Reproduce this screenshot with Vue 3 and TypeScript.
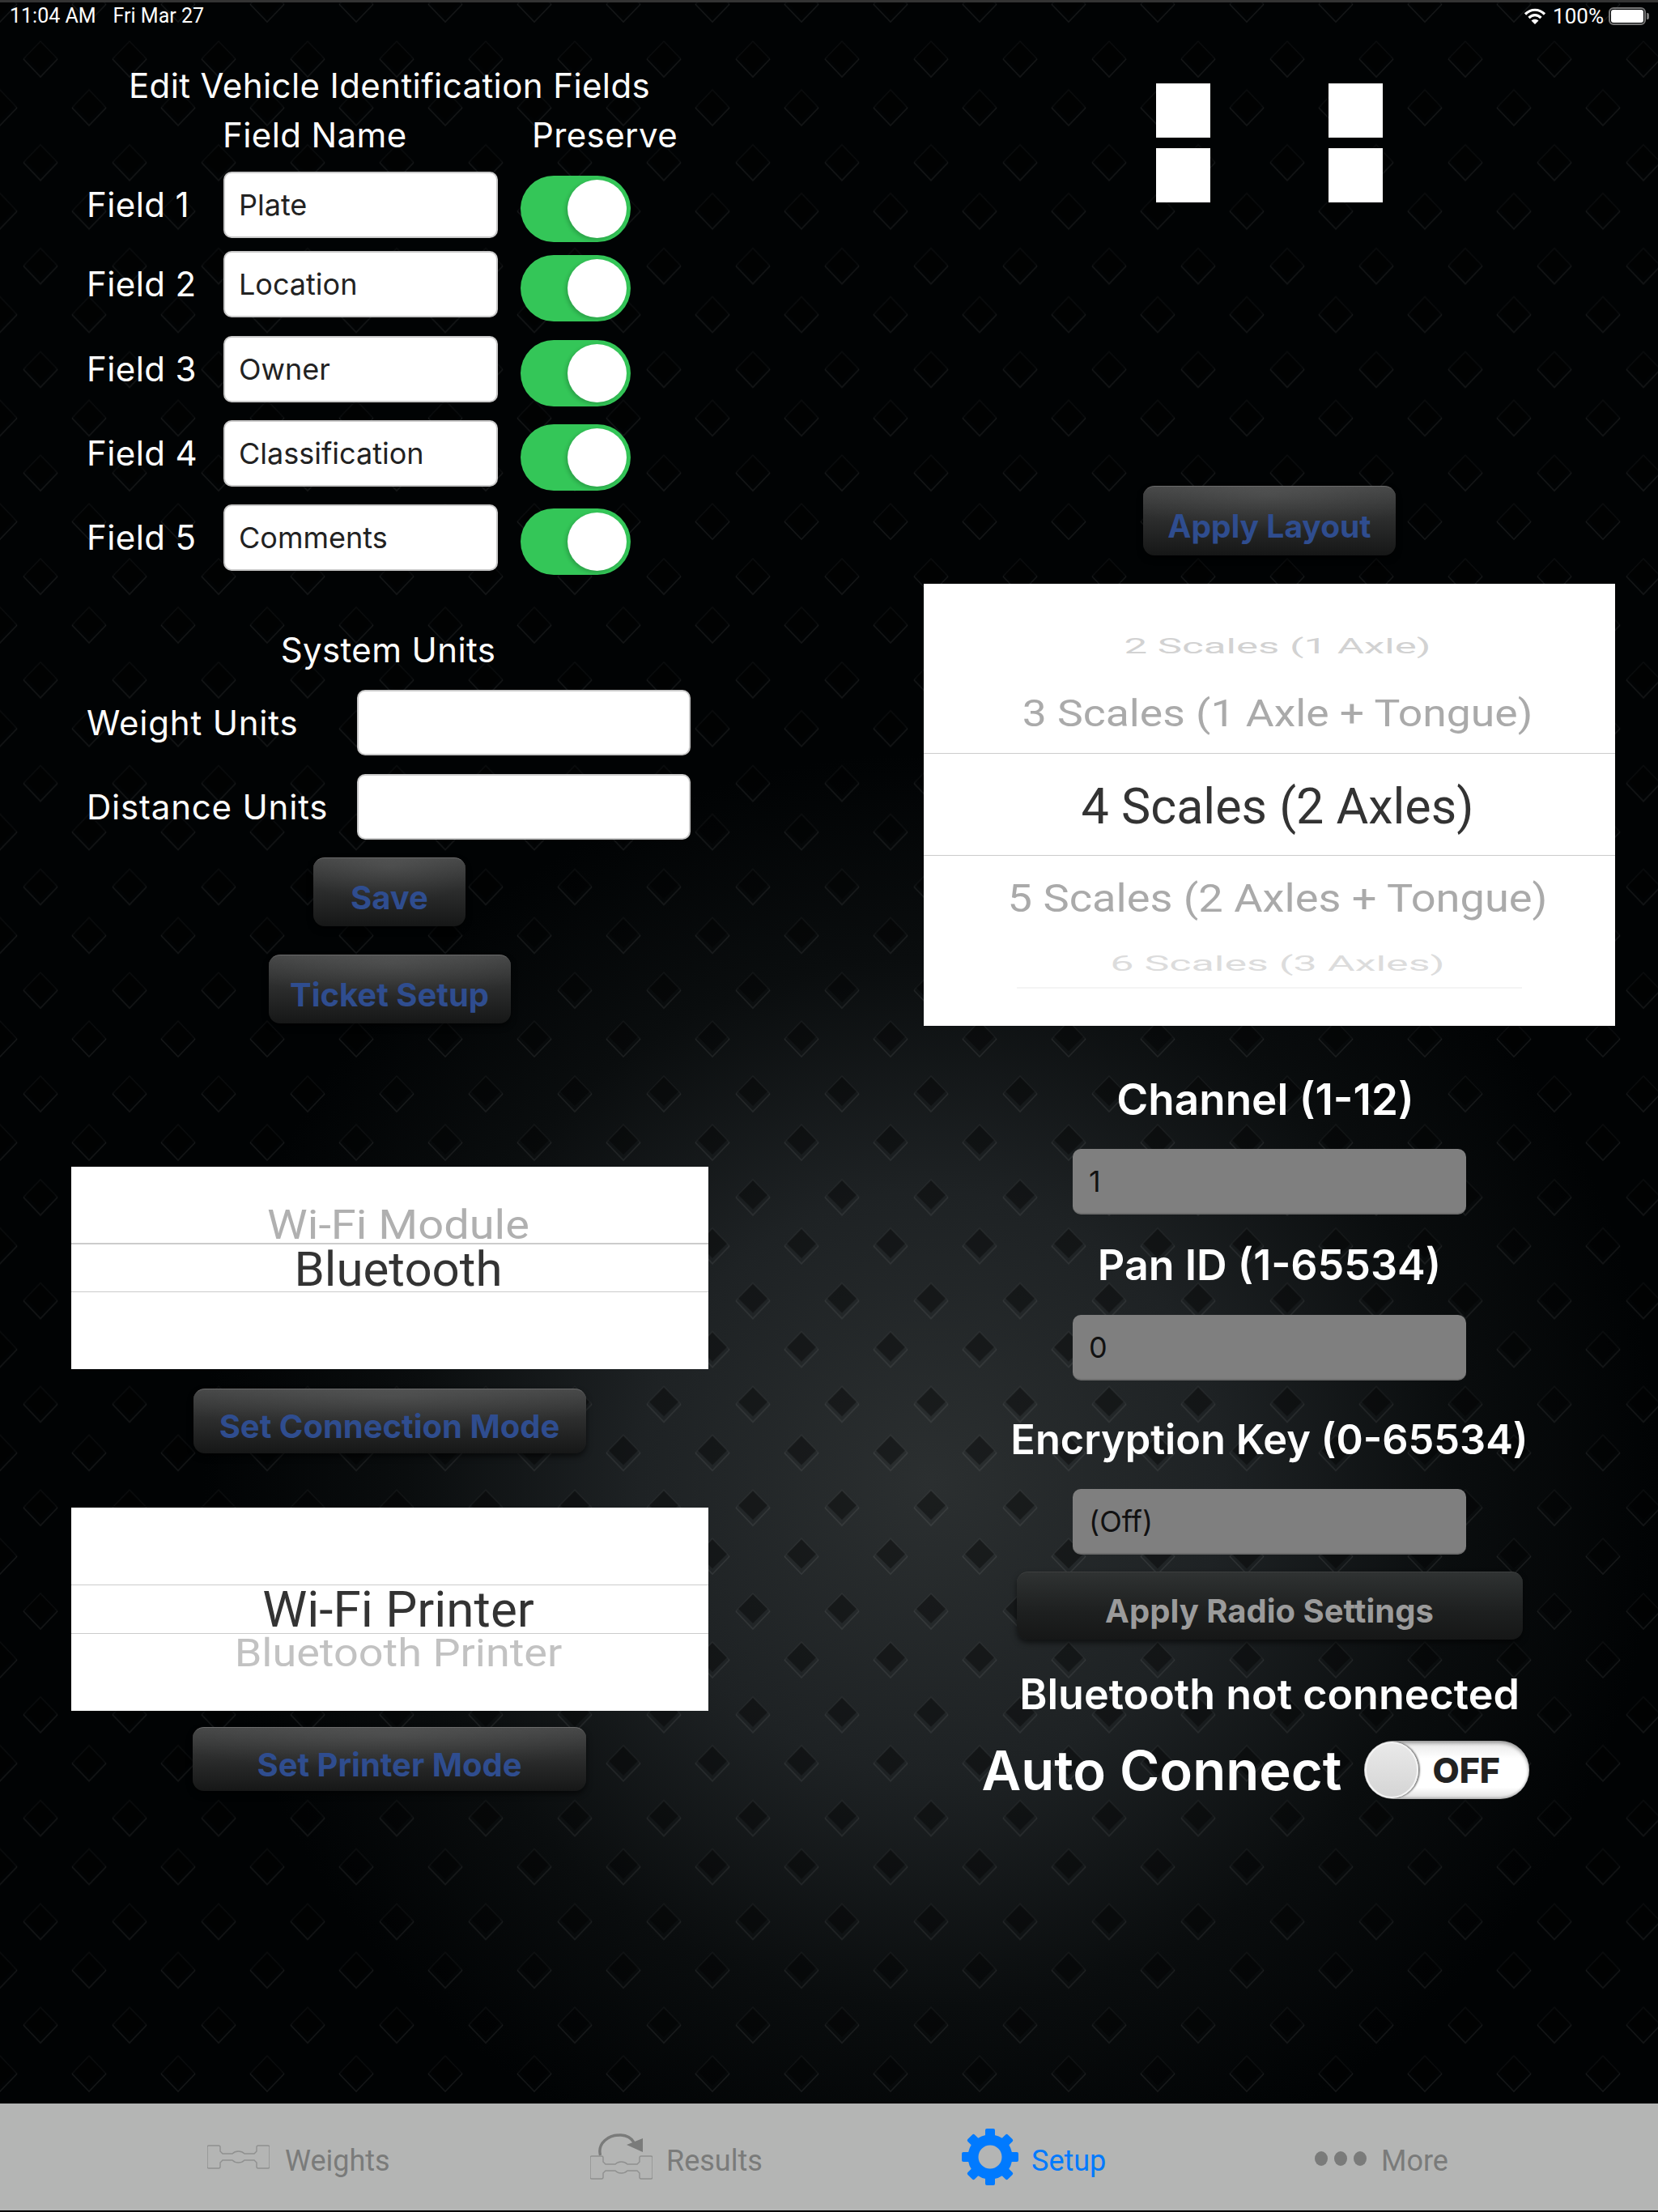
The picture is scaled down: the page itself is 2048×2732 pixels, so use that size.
<script setup lang="ts">
const fields: string[][] = [
  ['Field 1', 'Plate'],
  ['Field 2', 'Location'],
  ['Field 3', 'Owner'],
  ['Field 4', 'Classification'],
  ['Field 5', 'Comments'],
]
const teeth: number[] = [0, 45, 90, 135, 180, 225, 270, 315]
const axle =
  'M2 1H14Q16 1 16 3V8L19 11H31Q34 8 38.5 8Q43 8 46 11H58L61 8V3Q61 1 63 1H75Q77 1 77 3V27Q77 29 75 29H63Q61 29 61 27V22L58 19H46Q43 22 38.5 22Q34 22 31 19H19L16 22V27Q16 29 14 29H2Q0 29 0 27V3Q0 1 2 1Z'
</script>

<template>
  <div class="root">
    <svg class="bg" width="2048" height="2732" xmlns="http://www.w3.org/2000/svg">
      <defs>
        <radialGradient id="glow" gradientUnits="userSpaceOnUse" cx="1150" cy="1830" r="900">
          <stop offset="0" stop-color="#2b2f30" />
          <stop offset="0.4" stop-color="#1e2224" />
          <stop offset="0.72" stop-color="#0a0d0e" />
          <stop offset="1" stop-color="#010304" />
        </radialGradient>
        <g id="dia">
          <path d="M-21 0L0 -22L21 0" fill="none" stroke="#fff" stroke-opacity="0.04" stroke-width="1.5" />
          <path d="M-21 0L0 22L21 0" fill="none" stroke="#fff" stroke-opacity="0.075" stroke-width="1.5" />
          <path d="M-18 -3L0 -21L18 -3L0 15Z" fill="#000" fill-opacity="0.38" />
        </g>
        <pattern id="diamonds" patternUnits="userSpaceOnUse" width="110" height="127.8" patternTransform="translate(0 40)">
          <use href="#dia" x="50" y="33" />
          <use href="#dia" x="0" y="93" />
          <use href="#dia" x="110" y="93" />
        </pattern>
      </defs>
      <rect width="2048" height="2732" fill="url(#glow)" />
      <rect width="2048" height="2732" fill="url(#diamonds)" />
    </svg>

    <header class="status">
      <div class="status-left"><span>11:04 AM</span><span>Fri Mar 27</span></div>
      <div class="status-right">
        <svg width="28" height="20" viewBox="0 0 28 20">
          <path d="M2 7.5C9 .5 19 .5 26 7.5" fill="none" stroke="#fff" stroke-width="3.2" />
          <path d="M6.500 12C11 7.500 17 7.500 21.500 12" fill="none" stroke="#fff" stroke-width="3.2" />
          <path d="M14 20L9.500 15.500C12 13 16 13 18.500 15.500Z" fill="#fff" />
        </svg>
        <span>100%</span>
        <div class="battery"><div class="battery-fill"></div></div>
        <div class="battery-nub"></div>
      </div>
    </header>

    <main class="main">
      <section class="left">
        <div class="label title">Edit Vehicle Identification Fields</div>
        <div class="heads">
          <span class="label head-name">Field Name</span>
          <span class="label head-preserve">Preserve</span>
        </div>
        <div v-for="f in fields" :key="f[0]" class="row">
          <span class="label row-label">{{ f[0] }}</span>
          <div class="input name-input">{{ f[1] }}</div>
          <div class="toggle"><div class="knob"></div></div>
        </div>

        <div class="label units-title">System Units</div>
        <div class="unit-row first-unit">
          <span class="label unit-label">Weight Units</span>
          <div class="input unit-input"></div>
        </div>
        <div class="unit-row second-unit">
          <span class="label unit-label">Distance Units</span>
          <div class="input unit-input"></div>
        </div>

        <button class="btn save">Save</button>
        <button class="btn ticket">Ticket Setup</button>

        <div class="picker small conn">
          <div class="p-top"><span class="wm">Wi-Fi Module</span></div>
          <div class="p-band thick"><span class="sel-b">Bluetooth</span></div>
        </div>
        <button class="btn conn-btn">Set Connection Mode</button>

        <div class="picker small print">
          <div class="p-blank"></div>
          <div class="p-band"><span class="sel-w">Wi-Fi Printer</span></div>
          <div class="p-bottom"><span class="bp">Bluetooth Printer</span></div>
        </div>
        <button class="btn print-btn">Set Printer Mode</button>
      </section>

      <section class="right">
        <div class="squares">
          <div class="sq"></div><div class="sq"></div><div class="sq"></div><div class="sq"></div>
        </div>
        <button class="btn layout-btn">Apply Layout</button>

        <div class="picker big">
          <div class="b-row r-a"><span class="t-a">2 Scales (1 Axle)</span></div>
          <div class="b-row r-b"><span class="t-b">3 Scales (1 Axle + Tongue)</span></div>
          <div class="b-row r-c"><span class="t-c">4 Scales (2 Axles)</span></div>
          <div class="b-row r-d"><span class="t-b t-d">5 Scales (2 Axles + Tongue)</span></div>
          <div class="b-row r-e"><span class="t-e">6 Scales (3 Axles)</span></div>
          <div class="b-row r-f"></div>
        </div>

        <div class="bold h-channel">Channel (1-12)</div>
        <div class="input grey">1</div>
        <div class="bold h-pan">Pan ID (1-65534)</div>
        <div class="input grey">0</div>
        <div class="bold h-enc">Encryption Key (0-65534)</div>
        <div class="input grey">(Off)</div>
        <button class="btn radio-btn">Apply Radio Settings</button>
        <div class="bold h-bt">Bluetooth not connected</div>
        <div class="auto">
          <span class="auto-label">Auto Connect</span>
          <div class="off-toggle"><div class="off-knob"></div><span class="off-text">OFF</span></div>
        </div>
      </section>
    </main>

    <nav class="tabbar">
      <div class="tab tab-weights">
        <svg width="77" height="30" viewBox="0 0 77 30"><path :d="axle" fill="none" stroke="#8f908f" stroke-width="1.4" /></svg>
        <span>Weights</span>
      </div>
      <div class="tab tab-results">
        <svg width="77" height="58" viewBox="0 0 77 58">
          <path d="M12.500 27C9 12 22 1.500 38 2C46 2.300 51 6 54 11" fill="none" stroke="#7a7b7a" stroke-width="3.4" />
          <path d="M65 6V23L45 14Z" fill="#7a7b7a" />
          <g transform="translate(0 27)"><path :d="axle" fill="none" stroke="#8f908f" stroke-width="1.4" /></g>
        </svg>
        <span>Results</span>
      </div>
      <div class="tab tab-setup">
        <svg width="70" height="70" viewBox="-35 -35 70 70">
          <circle r="21" fill="none" stroke="#007aff" stroke-width="13" />
          <rect v-for="a in teeth" :key="a" x="-6" y="-35" width="12" height="12" rx="2" fill="#007aff" :transform="`rotate(${a})`" />
        </svg>
        <span>Setup</span>
      </div>
      <div class="tab tab-more">
        <svg class="dots" width="64" height="20" viewBox="0 0 64 20">
          <ellipse cx="8" cy="10" rx="8" ry="9" fill="#7a7b7a" />
          <ellipse cx="32" cy="10" rx="8" ry="9" fill="#7a7b7a" />
          <ellipse cx="56" cy="10" rx="8" ry="9" fill="#7a7b7a" />
        </svg>
        <span>More</span>
      </div>
    </nav>
  </div>
</template>

<style scoped>
.root {
  position: relative;
  width: 2048px;
  height: 2732px;
  overflow: hidden;
  background: #010304;
  display: flex;
  flex-direction: column;
  font-family: Inter, "Liberation Sans", sans-serif;
  color: #fff;
}
.bg { position: absolute; left: 0; top: 0; }

.status {
  position: relative;
  height: 40px;
  box-sizing: border-box;
  border-top: 3px solid #333;
  display: flex;
  justify-content: space-between;
  align-items: center;
  padding: 0 12px 4px;
}
.status-left { display: flex; gap: 21px; font-family: Roboto, sans-serif; font-size: 25px; }
.status-right { display: flex; align-items: center; font-family: Roboto, sans-serif; font-size: 26px; }
.status-right svg { margin-right: 2px; }
.status-right span { margin-left: 6px; margin-right: 6px; }
.battery {
  width: 46px; height: 22px; box-sizing: border-box; border: 2px solid #777; border-radius: 6px; padding: 1px;
}
.battery-fill { width: 100%; height: 100%; background: #fff; border-radius: 3px; }
.battery-nub { width: 3px; height: 8px; background: #777; margin-left: 1px; margin-right: -1px; border-radius: 0 2px 2px 0; }

.main { position: relative; flex: 1; display: flex; min-height: 0; }
.left { width: 962px; display: flex; flex-direction: column; align-items: center; margin-right: 179px; }
.right { width: 854px; display: flex; flex-direction: column; align-items: center; }

.label { font-size: 42px; line-height: 50px; font-weight: 400; letter-spacing: 0.4px; white-space: nowrap; }
.title { margin-top: 41px; }
.heads { display: flex; align-self: flex-start; margin-top: 11px; margin-left: 275px; }
.head-name { width: 382px; }
.row { display: flex; align-self: flex-start; margin-left: 107px; height: 87px; margin-top: 17px; }
.heads + .row { margin-top: 20px; }
.heads + .row + .row { margin-top: 11px; }
.heads + .row + .row + .row { margin-top: 18px; }
.row-label { width: 169px; line-height: 82px; }
.input {
  box-sizing: border-box;
  height: 82px;
  background: #fff;
  border: 2px solid #c9c9c9;
  border-radius: 10px;
  color: #222;
  font-size: 36px;
  line-height: 78px;
  padding-left: 17px;
}
.name-input { width: 339px; }
.toggle {
  width: 136px; height: 82px; margin-left: 28px; margin-top: 5px;
  background: #34c658; border-radius: 41px; position: relative;
}
.knob {
  position: absolute; right: 5px; top: 5px; width: 73px; height: 72px; border-radius: 50%;
  background: #fff; box-shadow: -2px 2px 5px rgba(0, 0, 0, 0.2);
}
.units-title { margin-top: 68px; margin-right: 3px; }
.unit-row { display: flex; align-self: flex-start; margin-left: 107px; }
.unit-row .label { letter-spacing: 0.8px; }
.first-unit { margin-top: 24px; }
.second-unit { margin-top: 23px; }
.unit-label { width: 334px; line-height: 81px; }
.unit-input { width: 412px; height: 81px; }

.btn {
  display: block;
  box-sizing: border-box;
  border: 0;
  border-top: 1px solid #6a6a6a;
  border-radius: 14px;
  background:
    radial-gradient(ellipse 60% 55% at 50% 12%, rgba(255, 255, 255, 0.07), rgba(255, 255, 255, 0)),
    linear-gradient(#464747, #2d2e2e 45%, #161717);
  box-shadow: 0 4px 7px rgba(0, 0, 0, 0.55);
  color: #2f4d8f;
  font-family: Inter, sans-serif;
  font-weight: 700;
  font-size: 40px;
  padding: 12px 0 0;
  white-space: nowrap;
  text-align: center;
}
.save { width: 188px; height: 85px; margin-top: 22px; }
.ticket { width: 299px; height: 85px; margin-top: 35px; }
.conn-btn { width: 485px; height: 80px; margin-top: 24px; }
.print-btn { width: 486px; height: 79px; margin-top: 20px; }
.layout-btn { width: 312px; height: 86px; margin-top: 350px; font-size: 39px; }
.radio-btn {
  width: 625px; height: 84px; margin-top: 21px; color: #9b9b9b; font-size: 40px;
  border-top-color: #3d3f3f;
  background: linear-gradient(#2f3232, #1d1f1f 60%, #161717);
}

.picker { background: #fff; font-family: Roboto, sans-serif; overflow: hidden; }
.picker span { display: inline-block; white-space: nowrap; line-height: 1; }
.picker .wm, .picker .bp, .picker .sel-b, .picker .sel-w { line-height: 0.86; }
.small { width: 787px; height: 250px; }
.conn { margin-top: 177px; }
.print { margin-top: 67px; height: 251px; }
.p-top { height: 94px; padding: 50px 0 0 22px; box-sizing: border-box; display: flex; align-items: center; justify-content: center; }
.p-blank { height: 95px; }
.p-band {
  box-sizing: border-box; height: 61px; border-top: 1px solid #ccc; border-bottom: 1px solid #ccc; padding-left: 22px;
  display: flex; align-items: center; justify-content: center;
}
.thick { border-top-width: 2px; padding-top: 4px; }
.p-bottom { height: 48px; padding-left: 22px; display: flex; align-items: center; justify-content: center; }
.wm { font-size: 56px; color: #b0b0b0; transform: scaleY(0.89); }
.sel-b { font-size: 60px; color: #333; }
.sel-w { font-size: 62px; color: #333; }
.bp { font-size: 54px; color: #c2c2c2; transform: scaleY(0.88); }

.squares {
  display: grid; grid-template-columns: 67px 67px; grid-auto-rows: 67px; column-gap: 146px; row-gap: 13px; margin-top: 63px;
}
.sq { background: #fff; }

.big { width: 854px; height: 546px; margin-top: 35px; padding-top: 49px; box-sizing: border-box; }
.b-row { display: flex; align-items: center; justify-content: center; box-sizing: border-box; overflow: hidden; padding-left: 20px; }
.r-a { height: 56px; }
.r-b { height: 104px; padding-top: 6px; }
.r-c { height: 127px; padding-top: 5px; border-top: 1px solid #ccc; border-bottom: 1px solid #ccc; }
.r-d { height: 106px; }
.r-e { height: 54px; }
.r-f { height: 2px; margin: 2px 115px 0; padding: 0; background: #f4f4f4; }
.t-a { font-size: 51px; color: #d2d2d2; transform: scaleY(0.51); }
.t-b { font-size: 53.500px; color: #aaa; transform: scaleY(0.875); }
.t-d { font-size: 54.200px; }
.t-c { font-size: 61px; color: #333; }
.t-e { font-size: 52px; color: #dcdcdc; transform: scaleY(0.5); }

.bold { font-weight: 600; font-size: 52px; line-height: 60px; white-space: nowrap; }
.h-channel { margin-top: 61px; margin-right: 10px; font-size: 53px; }
.h-pan { margin-top: 33px; }
.h-enc { margin-top: 43px; font-size: 50.500px; }
.h-bt { margin-top: 38px; }
.grey {
  width: 486px; margin-top: 31px; height: 81px; background: #7f7f7f; border: 0; border-bottom: 2px solid #6e6e6e;
  color: #111; padding-left: 20px; line-height: 81px;
}
.auto { display: flex; align-items: center; height: 72px; margin-top: 27px; margin-right: 34px; }
.auto-label { font-weight: 600; font-size: 67px; white-space: nowrap; }
.off-toggle {
  position: relative;
  width: 204px; height: 72px; margin-left: 28px; border-radius: 36px; box-sizing: border-box;
  background: linear-gradient(#e6e6e6, #fff 30%, #fff 80%, #ddd);
  box-shadow: inset 0 3px 4px rgba(0, 0, 0, 0.35), inset 0 -2px 3px rgba(0, 0, 0, 0.2);
}
.off-knob {
  position: absolute; left: 1px; top: 1px; width: 66px; height: 70px; border-radius: 50%; box-sizing: border-box;
  background: linear-gradient(#e9e9e9, #d5d5d5);
  border: 2px solid #f4f4f4; box-shadow: 2px 0 2px rgba(0, 0, 0, 0.5);
}
.off-text { position: absolute; left: 84px; top: 13px; font-size: 43px; line-height: 46px; font-weight: 800; color: #222; }

.tabbar {
  position: relative;
  height: 132px;
  margin-bottom: 2px;
  background: #b4b5b4;
  color: #7a7b7a;
  font-family: Roboto, sans-serif;
  font-size: 36px;
}
.tabbar { display: flex; align-items: center; padding-left: 256px; }
.tab { display: flex; align-items: center; }
.tab span { line-height: 1; padding-top: 10px; }
.tab-weights { width: 473px; gap: 19px; }
.tab-results { width: 459px; gap: 17px; }
.tab-setup { width: 436px; gap: 16px; color: #007aff; }
.tab-more { gap: 18px; }
.dots { margin-top: 3px; }
</style>

<style>
html, body { background: #000; }
</style>
